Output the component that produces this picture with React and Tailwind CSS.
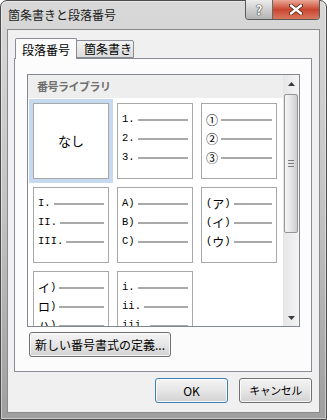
import React from "react";

const cells = [
  null,
  ["1.", "2.", "3."],
  ["①", "②", "③"],
  ["I.", "II.", "III."],
  ["A)", "B)", "C)"],
  ["(ア)", "(イ)", "(ウ)"],
  ["イ)", "ロ)", "ハ)"],
  ["i.", "ii.", "iii."],
];

const ui = { fontFamily: '"Noto Sans CJK JP", "Noto Sans", sans-serif' };
const mono = { fontFamily: '"Liberation Mono", "Noto Sans CJK JP", monospace' };

// wide glyphs (kana, circled numbers) get the CJK face at full size
const Label = ({ text }) => (
  <span className="flex items-center leading-none text-black">
    {[...text].map((ch, i) =>
      ch.charCodeAt(0) > 0x2000 ? (
        <span key={i} className="text-[12px]" style={ui}>{ch}</span>
      ) : (
        <span key={i} className="text-[10.5px]" style={mono}>{ch}</span>
      )
    )}
  </span>
);

const Cell = ({ rows }) => {
  if (!rows) {
    return (
      <div className="flex h-[76px] w-[76px] items-center justify-center border border-[#a8a8a8] bg-white text-[13px] text-black ring-4 ring-[#c5d9f1]" style={ui}>
        なし
      </div>
    );
  }
  return (
    <div className="flex h-[76px] w-[76px] flex-col border border-[#a8a8a8] bg-white pl-[4px] pr-[4px] pt-[6px]">
      {rows.map((r) => (
        <div key={r} className="flex h-[19px] items-center">
          <Label text={r} />
          <div className="ml-[3px] h-[2px] flex-1 bg-[#a9a9a9]" />
        </div>
      ))}
    </div>
  );
};

const Arrow = ({ up }) => (
  <svg width="7" height="4" viewBox="0 0 7 4">
    {up ? <path d="M0 4 L3.5 0 L7 4 Z" fill="#3a3a3a" /> : <path d="M0 0 L7 0 L3.5 4 Z" fill="#3a3a3a" />}
  </svg>
);

const WinButton = ({ children, width, primary }) => (
  <div
    className={`flex h-[25px] items-center justify-center rounded-[3px] border bg-gradient-to-b from-[#f4f4f4] via-[#e6e6e6] to-[#d2d2d2] text-[12px] text-black shadow-[inset_0_0_0_1px_rgba(255,255,255,0.8)] ${primary ? "border-[#3c7fb1] shadow-[inset_0_0_0_1px_#b4e2f7]" : "border-[#707070]"}`}
    style={{ ...ui, width }}
  >
    {children}
  </div>
);

export default function App() {
  return (
    <div className="h-[420px] w-[327px] bg-white">
      <div className="flex h-full w-full flex-col rounded-t-[7px] border border-[#4b4b4b] bg-gradient-to-b from-[#d9d9d9] via-[#c3c3c3] to-[#9f9f9f] shadow-[inset_0_0_0_1px_rgba(255,255,255,0.45)]">
        {/* title bar */}
        <div className="flex h-[28px] shrink-0">
          <div className="flex h-[28px] items-center pl-[7px] text-[12px] text-[#1b1b1b]" style={ui}>
            箇条書きと段落番号
          </div>
          <div className="-mt-px ml-auto mr-[6px] flex h-[20px] self-start overflow-hidden rounded-b-[4px] border border-t-0 border-[#5a5a5a]">
            <div className="flex w-[27px] items-center justify-center border-r border-[#6a6a6a] bg-gradient-to-b from-[#ececec] via-[#cfcfcf] to-[#b4b4b4]">
              <span className="text-[13px] font-bold leading-none text-white" style={{ ...ui, textShadow: "0 0 1px #333, 0 0 1px #333, 0 0 1px #333" }}>?</span>
            </div>
            <div className="flex w-[46px] items-center justify-center bg-gradient-to-b from-[#e9a797] via-[#c9462f] to-[#d9775d]">
              <svg width="14" height="11" viewBox="0 0 14 11">
                <path d="M2 1.5 L12 9.5 M12 1.5 L2 9.5" stroke="#4a2018" strokeWidth="4" strokeLinecap="round" />
                <path d="M2 1.5 L12 9.5 M12 1.5 L2 9.5" stroke="#ffffff" strokeWidth="2.4" strokeLinecap="round" />
              </svg>
            </div>
          </div>
        </div>

        {/* client area */}
        <div className="ml-[6px] flex h-[384px] w-[313px] flex-col border border-[#8a8a8a] bg-[#f0f0f0]">
          <div className="ml-[6px] mt-[8px] w-[298px]">
            {/* tabs */}
            <div className="flex items-end pl-[1px]">
              <div className="relative z-10 -mb-px flex h-[21px] w-[62px] items-start rounded-t-[2px] border border-b-0 border-[#898c95] bg-[#fcfcfc] pl-[6px] pt-[2px] text-[12px] text-black" style={ui}>
                段落番号
              </div>
              <div className="-ml-px flex h-[18px] w-[58px] items-center rounded-t-[2px] border border-[#898c95] bg-gradient-to-b from-[#f3f3f3] to-[#dcdcdc] pl-[7px] text-[12px] text-black" style={ui}>
                箇条書き
              </div>
            </div>
            {/* panel */}
            <div className="flex h-[314px] flex-col border border-[#898c95] bg-[#fcfcfc]">
              <div className="ml-[12px] mt-[15px] flex h-[253px] w-[273px] border border-[#828790] bg-white">
                <div className="flex w-[255px] flex-col overflow-hidden">
                  <div className="flex h-[23px] shrink-0 items-center bg-[#eeeeee] pl-[9px] text-[11px] font-bold tracking-[-0.5px] text-[#6e6e6e]" style={ui}>
                    番号ライブラリ
                  </div>
                  <div className="grid grid-cols-[76px_76px_76px] gap-[8px] pl-[5px] pt-[5px]">
                    {cells.map((c, i) => (
                      <Cell key={i} rows={c} />
                    ))}
                  </div>
                </div>
                <div className="flex w-[16px] flex-col bg-gradient-to-r from-[#e6e6e6] to-[#f3f3f3]">
                  <div className="flex h-[17px] shrink-0 items-center justify-center">
                    <Arrow up />
                  </div>
                  <div className="mx-[1px] mt-[2px] flex h-[139px] flex-col items-center justify-center gap-[2px] rounded-[2px] border border-[#959595] bg-gradient-to-r from-[#f6f6f6] via-[#e4e4e4] to-[#cdcdcd]">
                    <div className="h-px w-[6px] bg-[#7d7d7d]" />
                    <div className="h-px w-[6px] bg-[#7d7d7d]" />
                    <div className="h-px w-[6px] bg-[#7d7d7d]" />
                  </div>
                  <div className="mt-auto flex h-[17px] items-center justify-center">
                    <Arrow />
                  </div>
                </div>
              </div>
              <div className="ml-[14px] mt-[5px]">
                <WinButton width={142}>新しい番号書式の定義...</WinButton>
              </div>
            </div>
          </div>
          <div className="mr-[7px] mt-[6px] flex justify-end gap-[11px]">
            <WinButton width={73} primary>OK</WinButton>
            <WinButton width={73}>
              <span className="text-[11px] tracking-[-0.5px]">キャンセル</span>
            </WinButton>
          </div>
        </div>
      </div>
    </div>
  );
}
